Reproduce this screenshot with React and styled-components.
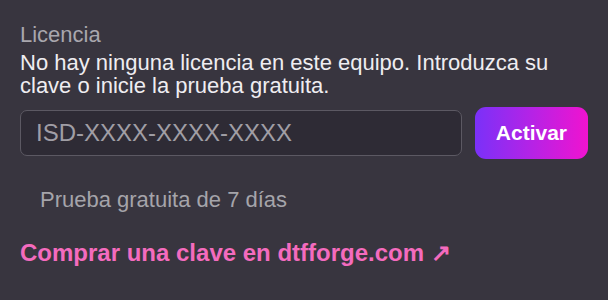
import React, { useState } from 'react';
import styled, { createGlobalStyle } from 'styled-components';

const GlobalStyle = createGlobalStyle`
  html, body {
    margin: 0;
    padding: 0;
    background: #38353f;
  }
  body {
    font-family: "Liberation Sans", Arial, sans-serif;
  }
`

const Panel = styled.div`
  width: 608px;
  height: 300px;
  box-sizing: border-box;
  padding: 22px 20px 0 20px;
  display: flex;
  flex-direction: column;
  background: #38353f;
`

const Label = styled.div`
  font-size: 22px;
  line-height: 25px;
  color: #a9a7ae;
`

const Message = styled.p`
  margin: 4px 0 0 0;
  font-size: 22px;
  line-height: 23px;
  color: #efedf1;
`

const KeyRow = styled.div`
  display: flex;
  align-items: center;
  gap: 13px;
  margin-top: 10px;
`

const KeyInput = styled.input`
  flex: 1;
  min-width: 0;
  height: 46px;
  box-sizing: border-box;
  padding: 0 15px;
  border: 1.5px solid #5c5963;
  border-radius: 7px;
  background: #2e2b35;
  color: #efedf1;
  font-family: "Liberation Sans", Arial, sans-serif;
  font-size: 24px;
  outline: none;

  &::placeholder {
    color: #a09ea5;
  }
`

const ActivateButton = styled.button`
  height: 52px;
  padding: 0 21px;
  border: none;
  border-radius: 11px;
  background: linear-gradient(90deg, #7a31f8 0%, #b523e6 50%, #f013cf 100%);
  color: #ffffff;
  font-family: "Liberation Sans", Arial, sans-serif;
  font-size: 21px;
  font-weight: 700;
  cursor: pointer;
`

const TrialButton = styled.button`
  align-self: flex-start;
  margin: 28px 0 0 20px;
  padding: 0;
  border: none;
  background: none;
  color: #a5a4aa;
  font-family: "Liberation Sans", Arial, sans-serif;
  font-size: 22px;
  line-height: 25px;
  cursor: pointer;
`

const BuyLink = styled.a`
  align-self: flex-start;
  margin-top: 27px;
  color: #f46bbe;
  font-size: 24px;
  line-height: 27px;
  font-weight: 700;
  text-decoration: none;
`

const App = () => {
  const [licenseKey, setLicenseKey] = useState('');

  return (
    <>
      <GlobalStyle />
      <Panel>
        <Label>Licencia</Label>
        <Message>
          No hay ninguna licencia en este equipo. Introduzca su clave o inicie la prueba gratuita.
        </Message>
        <KeyRow>
          <KeyInput
            placeholder="ISD-XXXX-XXXX-XXXX"
            value={licenseKey}
            onChange={(e) => setLicenseKey(e.target.value)}
          />
          <ActivateButton>Activar</ActivateButton>
        </KeyRow>
        <TrialButton>Prueba gratuita de 7 días</TrialButton>
        <BuyLink href="#">Comprar una clave en dtfforge.com ↗</BuyLink>
      </Panel>
    </>
  )
}

export default App
